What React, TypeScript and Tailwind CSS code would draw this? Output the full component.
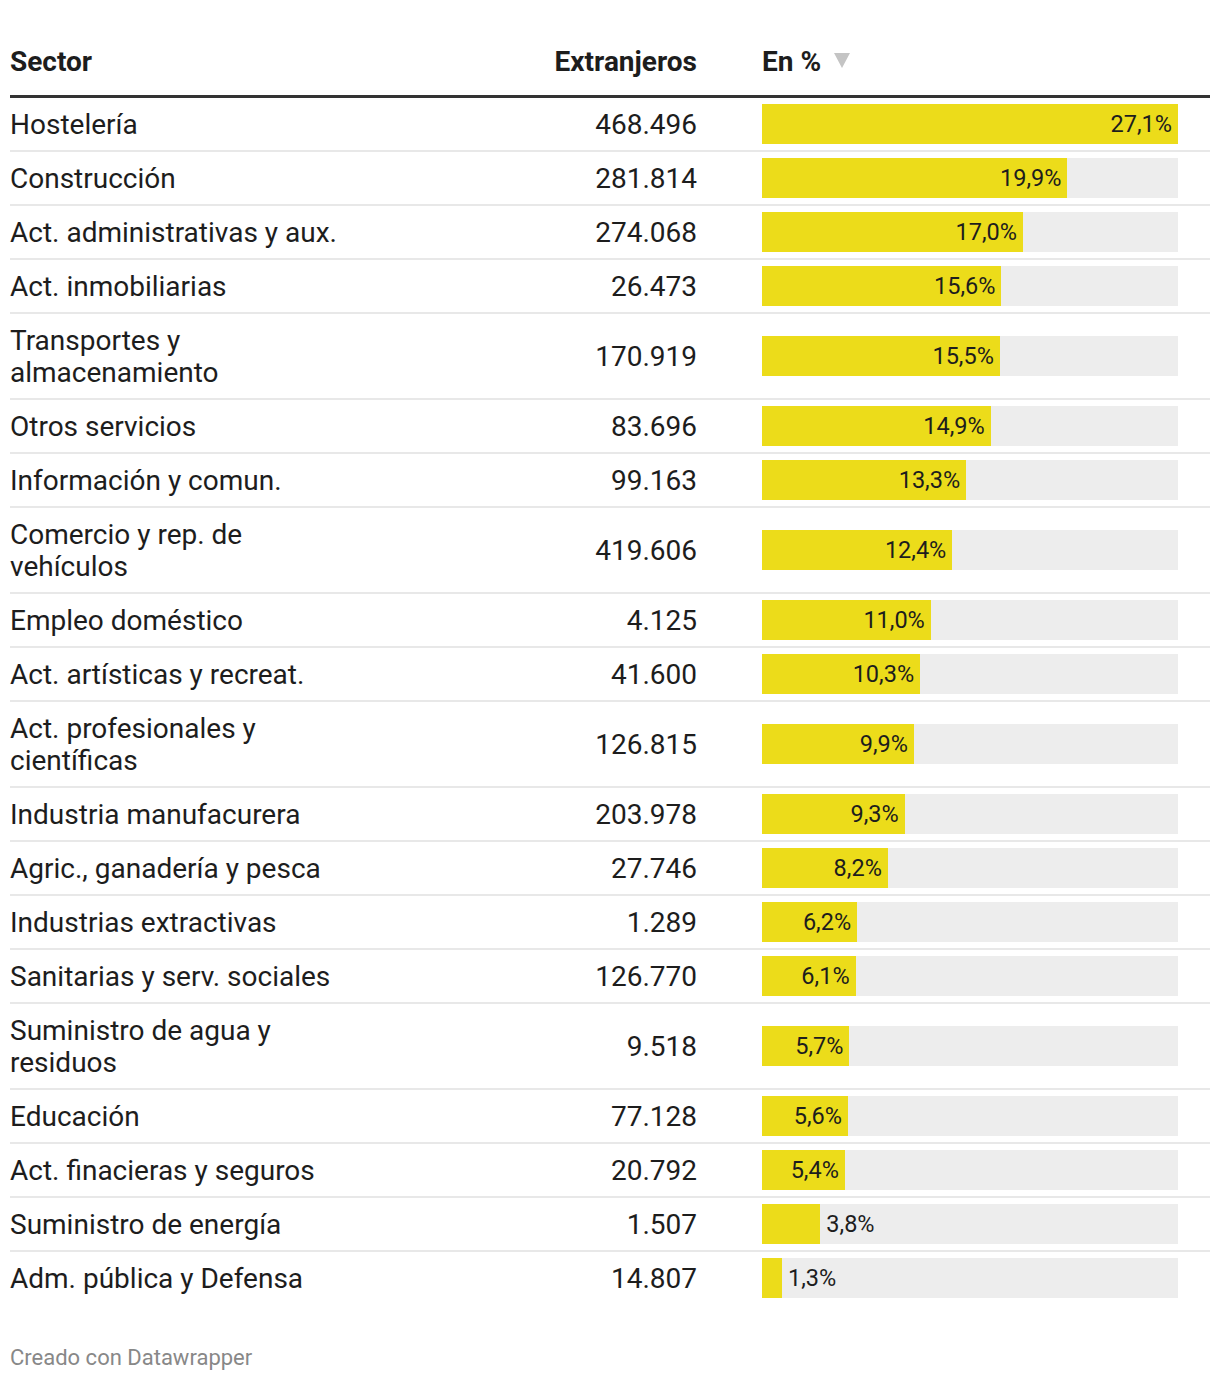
const rows: [string, string, number][] = [
  ['Hostelería', '468.496', 27.1],
  ['Construcción', '281.814', 19.9],
  ['Act. administrativas y aux.', '274.068', 17.0],
  ['Act. inmobiliarias', '26.473', 15.6],
  ['Transportes y almacenamiento', '170.919', 15.5],
  ['Otros servicios', '83.696', 14.9],
  ['Información y comun.', '99.163', 13.3],
  ['Comercio y rep. de vehículos', '419.606', 12.4],
  ['Empleo doméstico', '4.125', 11.0],
  ['Act. artísticas y recreat.', '41.600', 10.3],
  ['Act. profesionales y científicas', '126.815', 9.9],
  ['Industria manufacurera', '203.978', 9.3],
  ['Agric., ganadería y pesca', '27.746', 8.2],
  ['Industrias extractivas', '1.289', 6.2],
  ['Sanitarias y serv. sociales', '126.770', 6.1],
  ['Suministro de agua y residuos', '9.518', 5.7],
  ['Educación', '77.128', 5.6],
  ['Act. finacieras y seguros', '20.792', 5.4],
  ['Suministro de energía', '1.507', 3.8],
  ['Adm. pública y Defensa', '14.807', 1.3],
];

const MAX = 27.1;

const fmt = (v: number) => v.toFixed(1).replace('.', ',') + '%';

const App = () => {
  return (
    <div className="bg-white text-[#1d1d1d] px-[10px] pt-[46px] pb-[14px] w-[1220px]" style={{ fontFamily: 'Roboto, "Liberation Sans", sans-serif' }}>
      {/* header */}
      <div className="flex items-end pb-[17px] border-b-[3px] border-[#333333] font-bold text-[28px] leading-[32px]">
        <div className="w-[340px]">Sector</div>
        <div className="w-[347px] text-right">Extranjeros</div>
        <div className="ml-[65px] flex-1 flex items-center gap-[13px]">
          <span>En %</span>
          <svg width="16" height="15" viewBox="0 0 16 15" className="mt-[-4px]">
            <path d="M0 0 H16 L8 15 Z" fill="#c4c4c4" />
          </svg>
        </div>
      </div>

      {rows.map(([name, num, pct], i) => {
        const w = (pct / MAX) * 100;
        const inside = pct > 5;
        const last = i === rows.length - 1;
        return (
          <div key={name} className={`flex items-center py-[6px] text-[28px] leading-[32px] ${last ? '' : 'border-b-2 border-[#e8e8e8]'}`}>
            <div className="w-[340px] pt-[5px] pb-[3px]">{name}</div>
            <div className="w-[347px] text-right pt-[2px]">{num}</div>
            <div className="ml-[65px] w-[416px] h-[40px] bg-[#ededed] flex items-center">
              <div className="h-full bg-[#ecdc1a] flex items-center justify-end pr-[6px]" style={{ width: `${w}%` }}>
                {inside && <span className="text-[23.5px] leading-none pt-[1px]">{fmt(pct)}</span>}
              </div>
              {!inside && <span className="text-[23.5px] leading-none ml-[6px] pt-[1px]">{fmt(pct)}</span>}
            </div>
          </div>
        );
      })}

      <div className="mt-[40px] text-[22px] leading-[28px] text-[#888888]">Creado con Datawrapper</div>
    </div>
  );
};

export default App;
